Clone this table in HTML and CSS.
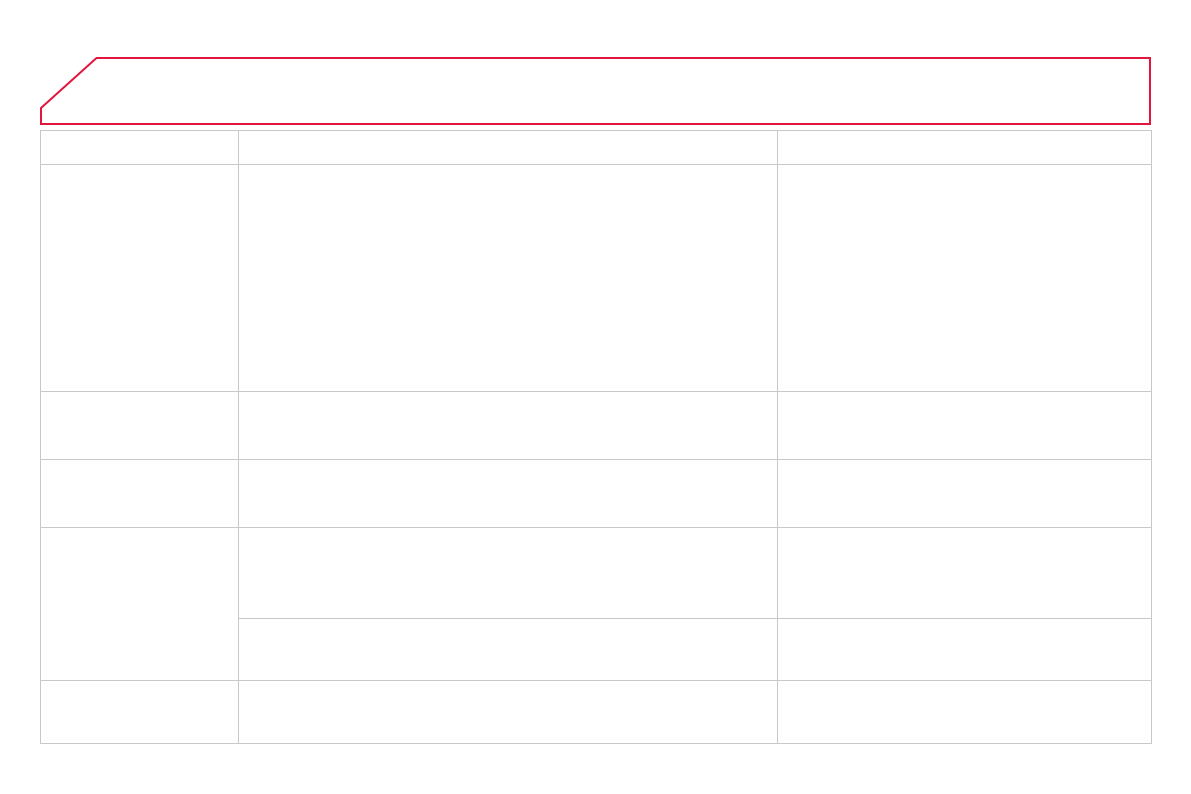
FILE: index.html
```html
<!DOCTYPE html>
<html>
<head>
<meta charset="utf-8">
<link rel="stylesheet" href="styles.css">
</head>
<body>
<div class="page">
  <svg class="header" width="1113" height="70" viewBox="0 0 1113 70">
    <path d="M2 52 L57.5 2 H1111 V68 H2 Z" fill="none" stroke="#e3173e" stroke-width="2"/>
  </svg>
  <div class="grid">
    <div class="cell r1"></div><div class="cell r1"></div><div class="cell r1"></div>
    <div class="cell r2"></div><div class="cell r2"></div><div class="cell r2"></div>
    <div class="cell r3"></div><div class="cell r3"></div><div class="cell r3"></div>
    <div class="cell r4"></div><div class="cell r4"></div><div class="cell r4"></div>
    <div class="cell span2"></div><div class="cell r5"></div><div class="cell r5"></div>
    <div class="cell r6"></div><div class="cell r6"></div>
    <div class="cell r7"></div><div class="cell r7"></div><div class="cell r7"></div>
  </div>
</div>
</body>
</html>
```
FILE: styles.css
```css
html, body {
  margin: 0;
  padding: 0;
  background: #ffffff;
  font-family: "Liberation Sans", Arial, sans-serif;
}
.page {
  padding: 56px 0 0 39px;
}
.header {
  display: block;
}
.grid {
  margin: 4px 0 0 1px;
  width: 1110px;
  display: grid;
  grid-template-columns: 197px 538px 373px;
  grid-template-rows: 33px 226px 67px 67px 90px 61px 62px;
  gap: 1px;
  padding: 1px;
  background: #c8c8c8;
}
.cell {
  background: #ffffff;
}
.span2 {
  grid-row: span 2;
}
```
